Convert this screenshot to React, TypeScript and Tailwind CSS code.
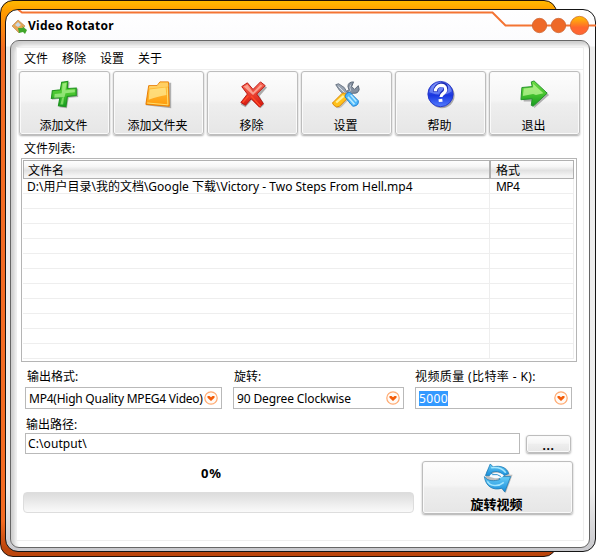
import React from 'react';

const cjk = "font-['Noto_Sans','Noto_Sans_CJK_SC',sans-serif]";
const raised =
  'border border-[#bdbdbd] bg-[linear-gradient(#fdfdfd_0%,#f5f5f5_45%,#eeeeee_52%,#e6e6e6_100%)] shadow-[0_1px_2px_#aaa,inset_0_0_0_1px_#fafafa]';

function AddIcon() {
  return (
    <svg width="32" height="32" viewBox="0 0 32 32">
      <path d="M13 4l8-2-1 8 10-1v9l-10 1-2 11-8-1 1-9-9 1 1-9 9-1z" fill="#777" opacity=".55" />
      <path d="M12.500 2.500l6.500-1-.5 7.500 9.500-.5v8l-9.500 1-1.500 11-8-1 1.500-8.500-9 .5 1-8 8.500-1z" fill="url(#gr)" stroke="#219321" strokeWidth="1.2" />
      <path d="M13.500 4l4-1-1 8 10-1v3l-10 1-1 4-4 .5-7 .5.5-4 7.500-1z" fill="#b8f59b" opacity=".65" />
      <path d="M13 19l2-1-1 8-3 0z" fill="#9cee7a" opacity=".7" />
    </svg>
  );
}
function FolderIcon() {
  return (
    <svg width="32" height="32" viewBox="0 0 32 32">
      <path d="M6 7l9-1 4-3 10 0 0 27-27-3z" fill="#777" opacity=".55" />
      <path d="M5 6l9 0 3-4 9 0 1 26-25-2z" fill="url(#fo)" stroke="#e67b00" />
      <path d="M6 6.500h8l3-3.500h8.500l.5 4-21 2z" fill="#ffcf62" />
      <path d="M6 10l17-2 1 8q-8 1-19 5z" fill="#ffe991" opacity=".75" />
      <path d="M3.500 24.500l22 2-.7-18.500" fill="none" stroke="#ffe375" />
    </svg>
  );
}
function RemoveIcon() {
  return (
    <svg width="32" height="32" viewBox="0 0 32 32">
      <path d="M5 8l6-4 6 8 8-8 6 4-8 9 5 9-4 4-9-9-7 8-5-3 8-10z" fill="#777" opacity=".6" />
      <path d="M4 7l6-4 6 7 8-8 5 4-9 9 7 10-4 4-9-9-6 7-5-3 7-9z" fill="url(#re)" stroke="#b9130f" />
      <path d="M6 7l4-2 6 8 8-8 2 1-10 10z" fill="#ffc0b0" opacity=".7" />
      <path d="M14 17l10 11M11 17l-6 7" stroke="#ff4b27" strokeWidth="1.5" />
    </svg>
  );
}
function ToolsIcon() {
  return (
    <svg width="32" height="32" viewBox="0 0 32 32">
      <path d="M3 25l11-12 6 6-10 10q-4 2-6 0z" fill="#777" opacity=".4" />
      <path d="M23 2q-6 0-6 5l1 3-5 5 4 4 5-5q6 1 7-4l-1-4-4 4-3-3z" fill="#8590a0" stroke="#596474" />
      <path d="M20 5q-2 3 0 6l-4 4" fill="none" stroke="#c4ccd5" />
      <path d="M4 5l3-1 6 4 5 8-3 2-7-7z" fill="#9aa5b3" stroke="#667180" />
      <path d="M7 7l8 8" stroke="#e2e7ec" />
      <path d="M2 23l9-9q3-1 5 2t-1 5l-7 7q-3 2-6-1t0-4z" fill="#ffc21b" stroke="#d98508" />
      <path d="M4.500 24l8-7" stroke="#fff09c" strokeWidth="2.4" />
      <path d="M14 18q0-4 5-5l9 9q1 5-5 6-1 1-9-10z" fill="#4eb7fb" stroke="#187bcc" />
      <path d="M17 18l7 8M20 16l6 7" stroke="#b5e9ff" strokeWidth="1.700" />
    </svg>
  );
}
function HelpIcon() {
  return (
    <svg width="32" height="32" viewBox="0 0 32 32">
      <circle cx="17" cy="16.5" r="13.5" fill="#777" opacity=".6" />
      <circle cx="15.5" cy="15" r="13.5" fill="url(#bl)" stroke="#2535c7" />
      <path d="M3.500 13C6 0 24-1 27.500 12q-9 7-24 1" fill="#9aaeff" opacity=".5" />
      <path d="M10 12.500c0-9 12-10 11-3 0 4-5 4-5 8" fill="none" stroke="#1929b5" strokeWidth="5" />
      <path d="M10 12c0-7 11-9 11-2 0 5-5 4-5 8" fill="none" stroke="#fff" strokeWidth="3.4" />
      <path d="M13.500 22l4-.5" stroke="#fff" strokeWidth="3.2" />
    </svg>
  );
}
function ExitIcon() {
  return (
    <svg width="32" height="32" viewBox="0 0 32 32">
      <path d="M2 9l13 0-1-7 17 14-16 14 1-7-12 0z" fill="#777" opacity=".55" />
      <path d="M2 8l11-1-1-5 3-1 14 13-15 14-2-1 1-7-12 1z" fill="url(#gr)" stroke="#23902a" />
      <path d="M4 9l10-1 0-4 11 10-8 2-3-1-11 2z" fill="#c6fa9e" opacity=".7" />
    </svg>
  );
}
function RotateIcon() {
  return (
    <svg width="32" height="32" viewBox="0 0 32 32">
      <path d="M4 9l5-7 3 3c8-3 15 0 16 7l3 0-7 19-5-5C10 29 3 23 3 16z" fill="#777" opacity=".45" />
      <path d="M3 13L8 1l3 3c8-2 14 1 16 7l-5 2c-4-5-9-5-13-3l3 3z" fill="url(#ro)" stroke="#187bb7" strokeWidth=".8" />
      <path d="M2 14c3 5 10 5 16 3l-2-3 13 0-6 16-3-4C11 29 3 24 2 14z" fill="url(#ro)" stroke="#187bb7" strokeWidth=".8" />
      <path d="M7 14c2-5 12-5 15-1-2 3-9 4-15 1" fill="#f7fbff" />
      <path d="M10 12q6-1 9 2" fill="none" stroke="#278dcc" />
      <path d="M9 5c6-1 11 0 15 5M5 19c3 5 11 6 17 1" fill="none" stroke="#a3e6ff" strokeWidth="1.6" />
    </svg>
  );
}

const tools = [
  ['添加文件', AddIcon], ['添加文件夹', FolderIcon], ['移除', RemoveIcon],
  ['设置', ToolsIcon], ['帮助', HelpIcon], ['退出', ExitIcon],
] as const;

function Select({ value, width, tracking, selected = false }: { value: string; width: string; tracking: string; selected?: boolean }) {
  return (
    <div className={`${width} flex h-[22px] items-center justify-between border border-[#b9b9b9] bg-white px-[3px]`}>
      <span className={`whitespace-nowrap leading-[15px] ${tracking} ${selected ? 'bg-[#3399ff] text-white' : ''}`}>{value}</span>
      <svg className="shrink-0" width="14" height="14" viewBox="0 0 14 14">
        <circle cx="7" cy="7" r="6.200" fill="#fffaf5" stroke="#ffa970" strokeWidth="1.2" />
        <path d="M3.500 5h2L7 6.300 8.500 5h2v1.800L7 10 3.500 6.800z" fill="#f45c08" />
      </svg>
    </div>
  );
}

export default function App() {
  return (
    <main className={`relative h-[557px] w-[596px] overflow-hidden bg-white text-[12px] leading-[16px] text-black ${cjk}`}>
      <svg width="0" height="0" className="absolute">
        <defs>
          <linearGradient id="gr" x2="0" y2="1"><stop stopColor="#6cdb43" /><stop offset=".5" stopColor="#48c52f" /><stop offset="1" stopColor="#159b20" /></linearGradient>
          <linearGradient id="fo" x2="0" y2="1"><stop stopColor="#ffc747" /><stop offset="1" stopColor="#ff9a09" /></linearGradient>
          <linearGradient id="re" x2="0" y2="1"><stop stopColor="#fa6c59" /><stop offset="1" stopColor="#d71308" /></linearGradient>
          <linearGradient id="bl" x2="0" y2="1"><stop stopColor="#7186f2" /><stop offset=".55" stopColor="#1936e0" /><stop offset="1" stopColor="#537eff" /></linearGradient>
          <linearGradient id="ro" x2="0" y2="1"><stop stopColor="#68cdf7" /><stop offset="1" stopColor="#188cda" /></linearGradient>
          <linearGradient id="sun" x2="0" y2="1"><stop stopColor="#ffc400" /><stop offset=".6" stopColor="#ff672c" /><stop offset="1" stopColor="#ff6536" /></linearGradient>
        </defs>
      </svg>
      <div className="h-[557px] w-[557px] rounded-[13px] border border-[#211007] bg-[linear-gradient(#ffb800_0px,#ff9d00_10px,#f36b23_48px,#f36b23_520px,#bc450b_548px)] pl-[4px] pt-[8px]">
        <div className="relative h-[543px] w-[591px] rounded-[13px] border border-[#151515] bg-[linear-gradient(#fff_0px,#fbfbfd_36px,#ececec_37px,#eee_480px,#c8c8cc_541px)] pl-[4px]">
          <svg className="absolute left-0 top-0" width="590" height="36" viewBox="6 10 590 36">
            <path d="M18 9.500l4 3h470.500l13 13H596" fill="none" stroke="#f47433" strokeWidth="2" />
            <circle cx="539.5" cy="25.5" r="7.2" fill="#ee6928" stroke="#c8602e" strokeWidth=".7" />
            <circle cx="558.5" cy="25.5" r="7.2" fill="#ee6928" stroke="#c8602e" strokeWidth=".7" />
            <circle cx="579.5" cy="25.5" r="9.2" fill="url(#sun)" stroke="#c8602e" strokeWidth=".7" />
          </svg>
          <header className="flex h-[30px] items-center pl-[2px] pt-[2px]">
            <svg width="15" height="15" viewBox="0 0 15 15">
              <path d="M0 7l6-6 7 6-6 7z" fill="#e6a653" stroke="#b98b58" strokeWidth=".7" />
              <path d="M3 6l3-3 3 3-3 2z" fill="#c8d7e4" />
              <path d="M6 9l5 0-1-2 5 4-2 4-2-2-4 1z" fill="#41a62b" />
            </svg>
            <h1 className="ml-[1px] text-[12px] font-bold tracking-[0.25px]">Video Rotator</h1>
          </header>
          <section className="h-[508px] w-[580px] rounded-[9px] border border-[#666] bg-white pl-[5px] pt-[6px] shadow-[inset_4px_4px_4px_#ccc]">
            <div className="h-[494px] w-[568px] border border-[#eee] bg-white">
              <nav className="flex h-[22px] items-center gap-[14px] border-b border-[#eee] pl-[7px] pt-px">
                {['文件', '移除', '设置', '关于'].map(x => <span key={x}>{x}</span>)}
              </nav>
              <div className="flex gap-[3px] pl-[2px] pt-[1px]">
                {tools.map(([label, Icon]) => (
                  <button key={label} className={`flex h-[64px] w-[91px] shrink-0 flex-col items-center rounded-[3px] pt-[8px] ${raised}`}>
                    <Icon />
                    <span className="mr-[2px] mt-[8px] leading-[16px]">{label}</span>
                  </button>
                ))}
              </div>
              <div className="flex h-[23px] items-center pl-[7px] pt-[5px]">文件列表:</div>
              <div className="ml-[4px] h-[204px] w-[556px] border border-[#b5b5b5] bg-white p-px">
                <div className="flex h-[19px] w-[551px] bg-[linear-gradient(#fff,#f5f5f5_35%,#e1e1e1_55%,#f5f5f5_85%)]">
                  <div className="flex w-[467px] items-center border border-[#b0b0b0] pl-[4px] pt-[2px]">文件名</div>
                  <div className="flex flex-1 items-center border border-[#b0b0b0] pl-[5px] pt-[2px]">格式</div>
                </div>
                {Array.from({ length: 12 }, (_, i) => (
                  <div key={i} className="flex h-[15px] w-[551px] border-b border-r border-[#eee] leading-[16px]">
                    <div className="w-[467px] whitespace-nowrap border-r border-[#eee] pl-[4px]">{i === 0 && 'D:\\用户目录\\我的文档\\Google 下载\\Victory - Two Steps From Hell.mp4'}</div>
                    <div className="pl-[6px] tracking-[-0.6px]">{i === 0 && 'MP4'}</div>
                  </div>
                ))}
              </div>
              <div className="flex gap-[11px] pl-[8px] pt-[6px]">
                <div><label className="block h-[19px] pl-[2px] pt-px">输出格式:</label><Select value="MP4(High Quality MPEG4 Video)" width="w-[197px]" tracking="tracking-[-0.24px]" /></div>
                <div><label className="block h-[19px] pl-px pt-px">旋转:</label><Select value="90 Degree Clockwise" width="w-[171px]" tracking="tracking-[-0.13px]" /></div>
                <div><label className="block h-[19px] pt-px tracking-[0.38px]">视频质量 (比特率 - K):</label><Select value="5000" width="w-[157px]" tracking="tracking-[0.4px]" selected /></div>
              </div>
              <label className="block h-[24px] pl-[9px] pt-[8px]">输出路径:</label>
              <div className="flex items-center gap-[6px] pl-[8px]">
                <div className="flex h-[21px] w-[495px] items-center border border-[#b9b9b9] pl-[2px] tracking-[0.1px]">C:\output\</div>
                <button className={`flex h-[18px] w-[45px] items-center justify-center rounded-[3px] pt-[4px] font-bold tracking-[0.6px] ${raised}`}>...</button>
              </div>
              <div className="flex gap-[8px] pl-[6px] pt-[7px]">
                <div className="w-[391px]">
                  <div className="h-[31px] pl-[178px] pt-[4px] text-[13px] font-bold tracking-[0.8px]">0%</div>
                  <div className="h-[21px] rounded-[4px] border border-[#ddd] bg-[linear-gradient(#dcdcdc,#fafafa)]" />
                </div>
                <button className={`flex h-[53px] w-[151px] flex-col items-center rounded-[3px] pt-px ${raised}`}>
                  <RotateIcon />
                  <span className="mr-[2px] mt-[2px] whitespace-nowrap text-[13px] font-bold leading-[17px]">旋转视频</span>
                </button>
              </div>
            </div>
          </section>
        </div>
      </div>
    </main>
  );
}
